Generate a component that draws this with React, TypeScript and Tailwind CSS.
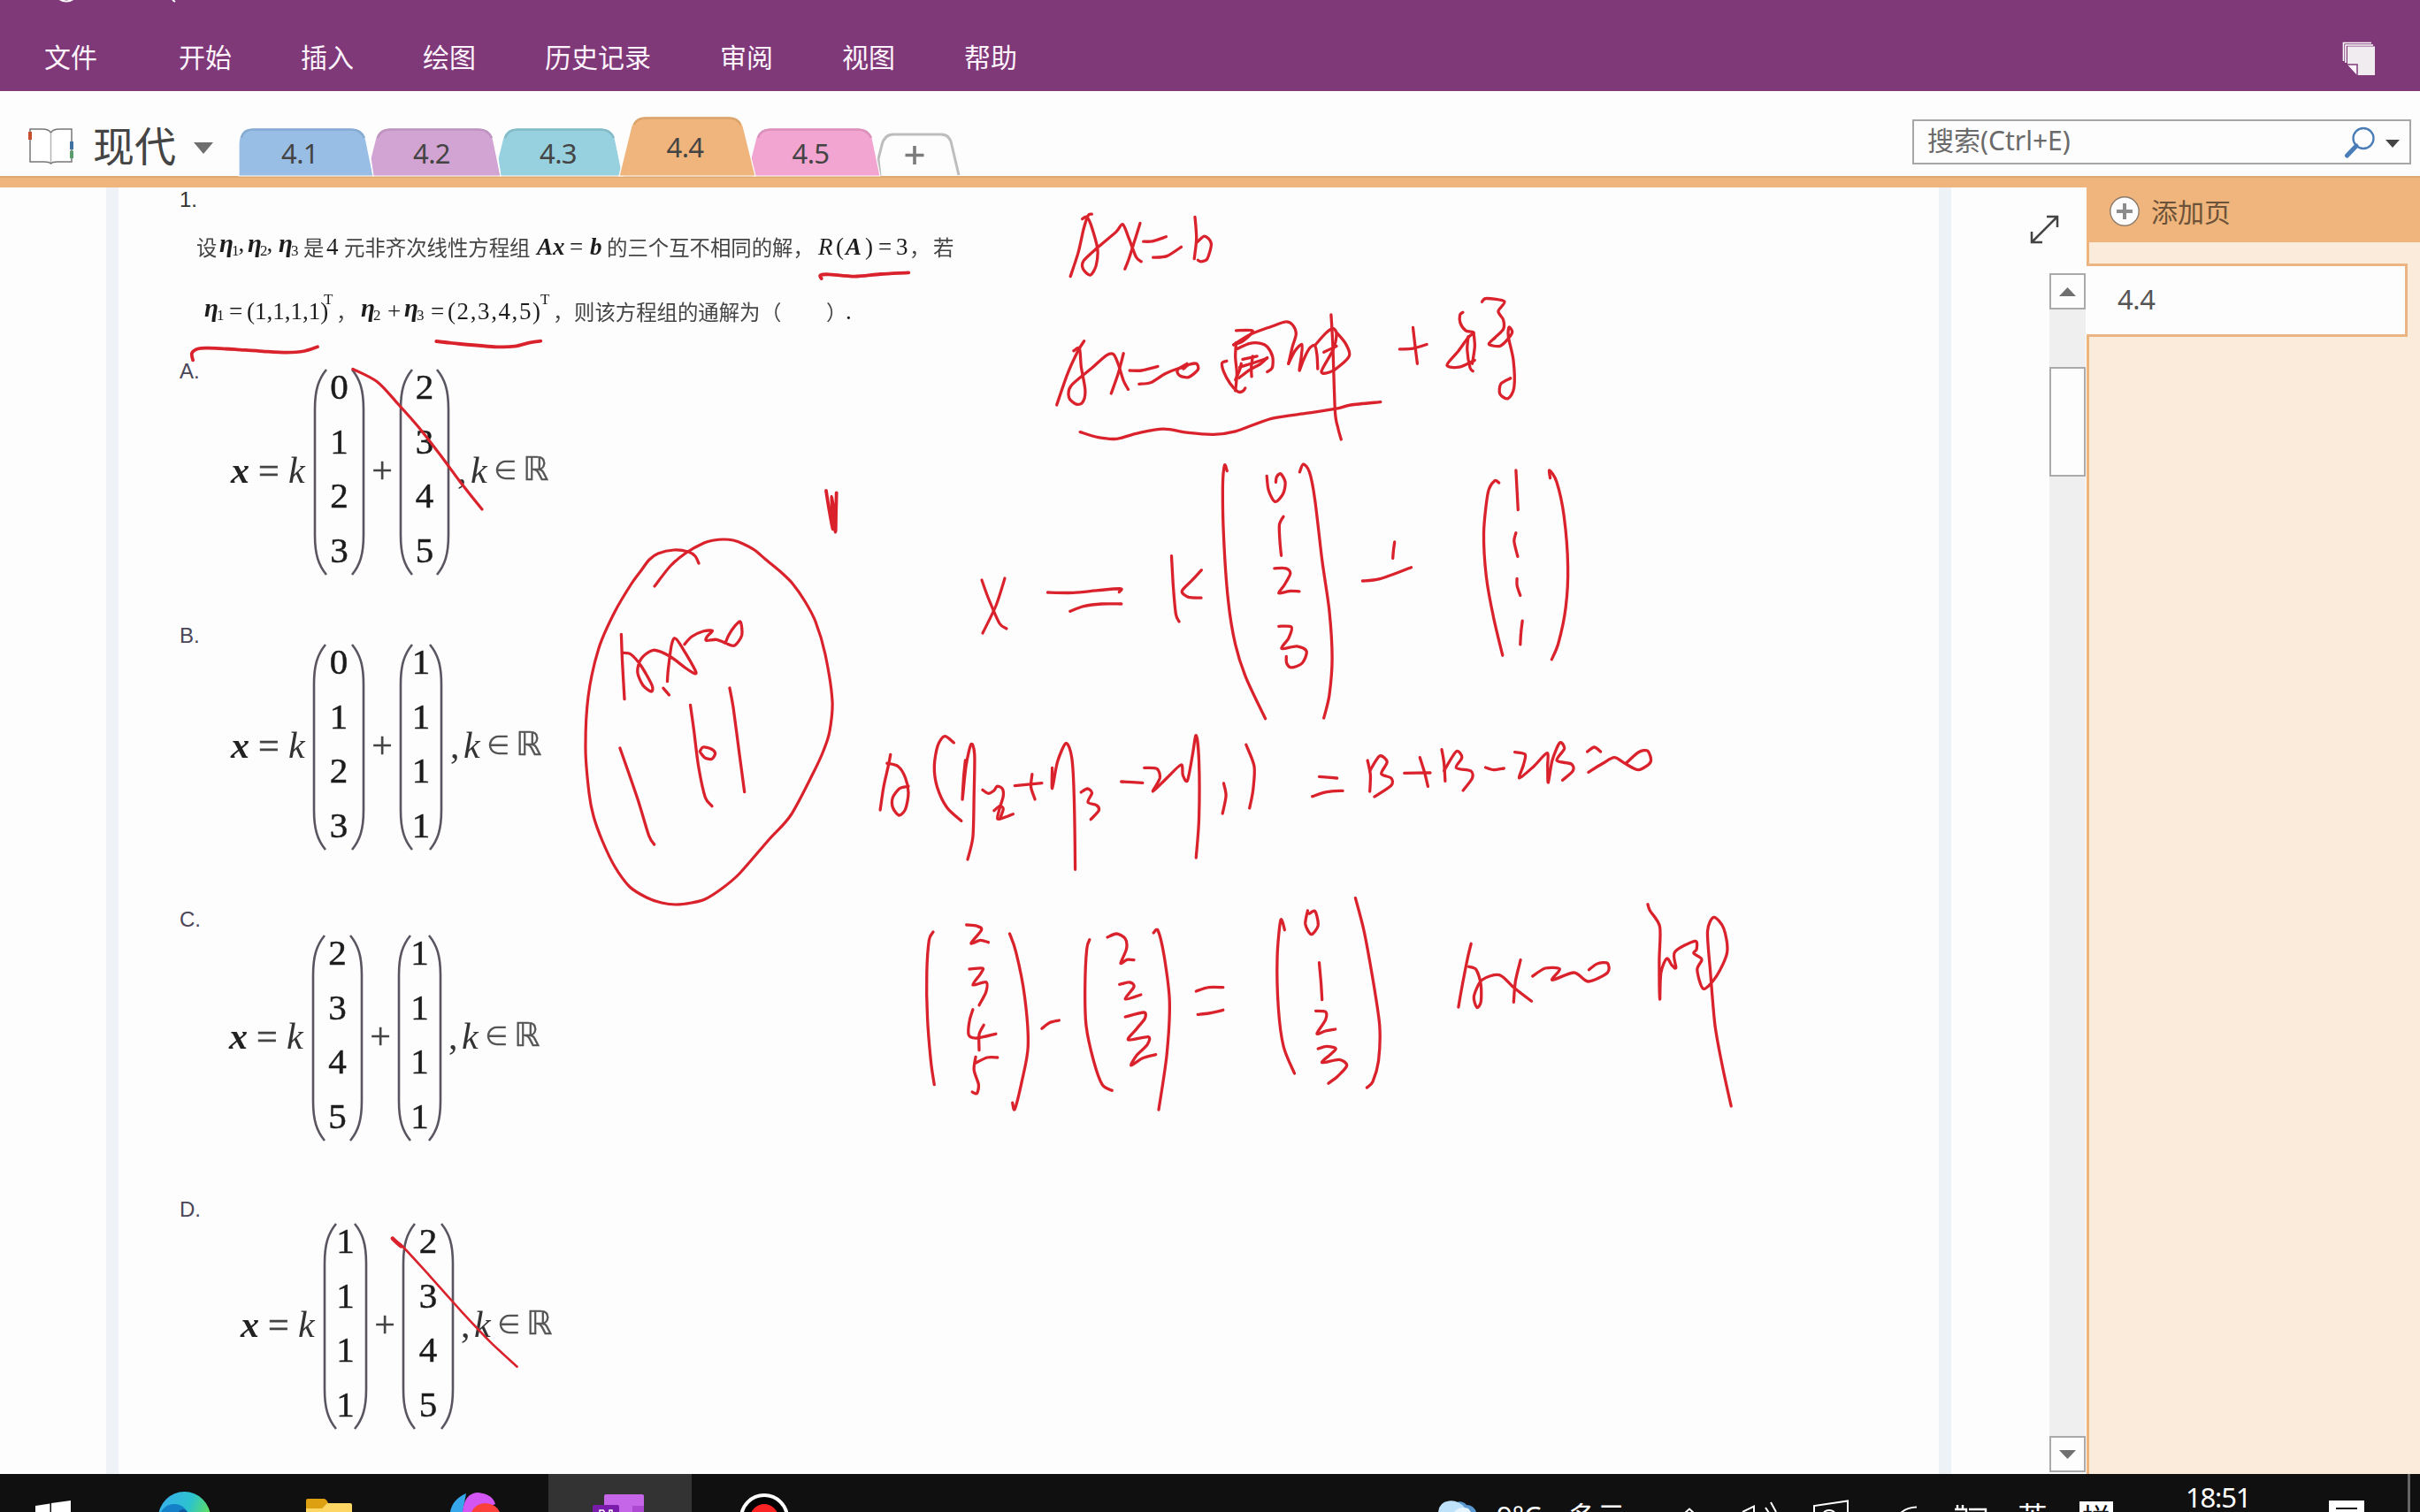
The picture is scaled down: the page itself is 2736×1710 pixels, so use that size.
import React from "react";

type Frame = { x: number; y: number; sx: number; sy: number; strokes: string[]; width?: number };

const MENU = [
  { label: "文件", cls: "ml-[50px]" },
  { label: "开始", cls: "ml-[92px]" },
  { label: "插入", cls: "ml-[78px]" },
  { label: "绘图", cls: "ml-[78px]" },
  { label: "历史记录", cls: "ml-[78px]" },
  { label: "审阅", cls: "ml-[78px]" },
  { label: "视图", cls: "ml-[78px]" },
  { label: "帮助", cls: "ml-[78px]" },
];

const TABS = [
  { label: "4.1", w: 152, h: 54, fill: "#99bee6", edge: "#86abd3", box: "w-[152px] h-[54px]", square: true, tail: "pr-[14px] pt-[3px]" },
  { label: "4.2", w: 147, h: 54, fill: "#d2a4d3", edge: "#be93c0", box: "w-[147px] h-[54px] -ml-[3px]", tail: "pr-[9px] pt-[3px]" },
  { label: "4.3", w: 141, h: 54, fill: "#97d0de", edge: "#84bac8", box: "w-[141px] h-[54px] -ml-[3px]", tail: "pr-[5px] pt-[3px]" },
  { label: "4.4", w: 154, h: 67, fill: "#efb57c", edge: "#dca46d", box: "w-[154px] h-[67px] -ml-[4px] z-10", tail: "pr-[5px] pt-[1px]" },
  { label: "4.5", w: 146, h: 54, fill: "#f2a5d0", edge: "#da90ba", box: "w-[146px] h-[54px] -ml-[5px]", tail: "pr-[11px] pt-[3px]" },
];

const INK: Frame[] = [
  {
    x: 180, y: 200, sx: 0.58675, sy: 0.33333, width: 3.8,
    strokes: [
      "1276 345 1274 334 1290 331 1340 338 1390 330 1444 325",
      "534 558 580 567 650 577 685 575 715 562 735 557",
      "65 622 63 598 76 583 95 581 150 586 200 592 245 596 280 591 305 577",
      "1285 1065 1290 1120 1298 1195 1297 1140 1296 1085 1300 1140 1303 1205 1304 1140 1305 1072",
    ],
  },
  { x: 180, y: 200, sx: 0.58675, sy: 0.33333, width: 3.2, strokes: ["373 652 420 695 460 770 500 850 540 940 580 1035 622 1128"] },
  {
    x: 0, y: 0, sx: 1, sy: 1, width: 3.2,
    strokes: [
      "790 637 786 629 778 624 762 622 744 626 734 633 725 645 714 660 695 692 677 733 665 788 662 847 666 897 671 923 681 951 695 980 712 1003 731 1015 748 1021 764 1023 782 1021 797 1017 816 1005 836 988 869 950 894 922 920 873 931 849 938 827 941 793 933 740 922 703 910 680 896 660 884 648 866 633 853 622 840 615 829 611 818 610 807 611 796 614 776 625 758 640 740 663",
      "1110 656 1118 678 1130 705 1138 711",
      "1136 654 1126 685 1111 716",
    ],
  },
  {
    x: 180, y: 660, sx: 0.5102, sy: 0.33333,
    strokes: [
      "1024 172 1026 260 1031 392",
      "1026 235 1045 240 1068 280 1092 345 1090 366 1072 345 1060 300 1068 255 1095 226 1130 245 1165 285 1186 305 1188 295 1160 220 1143 185 1135 210 1128 290 1126 332",
      "1117 355 1130 378",
      "1164 206 1180 180 1205 162 1226 160 1215 178 1212 193 1235 190 1255 202 1275 210 1291 175 1288 130 1275 145 1262 175 1255 200",
      "1021 558 1060 730 1085 855 1097 885",
      "1177 412 1185 500 1195 620 1210 725 1225 755",
      "1198 570 1205 555 1222 560 1232 575 1225 595 1210 592 1200 575",
      "1264 354 1272 420 1285 570 1297 707",
    ],
  },
  { x: 180, y: 1160, sx: 0.5102, sy: 0.33333, strokes: ["516 722 540 750 600 850 670 970 735 1075 793 1157"], width: 2.6 },
  { x: 180, y: 1160, sx: 0.5102, sy: 0.33333, strokes: ["517 722 526 735 536 748"], width: 4.5 },
  {
    x: 1160, y: 220, sx: 0.40816, sy: 0.38265,
    strokes: [
      "123 242 145 170 160 100 172 62 182 58",
      "156 72 168 66 180 90 198 160 194 210 178 238 158 220 160 195 200 155 250 110 268 88 285 130 305 185 319 198",
      "316 85 300 140 285 190 274 220",
      "325 139 350 138 388 125",
      "352 186 390 182 430 155",
      "468 66 472 130 466 190",
      "475 140 495 123 513 145 502 190 485 198 476 194",
      "85 622 115 530 145 460 161 433",
      "132 462 148 455 153 510 164 580 156 615 138 619 119 600 125 565 180 515 222 476 242 472 255 500 270 550 283 576",
      "270 470 255 530 236 588",
      "287 520 320 520 365 508",
      "313 560 345 556 385 530 425 513 440 512",
      "446 500 420 518 425 535 450 540 476 518 472 500 450 503 436 515",
      "582 402 628 403 602 432 575 444",
      "582 438 580 480 584 530 580 580",
      "556 492 543 498 548 525 565 558 583 580 592 584 602 580 607 572",
      "575 444 620 414 680 390 720 376 738 385 748 412 738 450 727 500",
      "585 456 620 440 650 440 668 450 683 480 682 512 668 524",
      "600 487 640 478",
      "580 548 592 518 596 500",
      "590 542 620 518 650 500 668 482",
      "592 510 640 494 668 484",
      "628 478 624 510 625 538",
      "727 500 745 462 764 443 763 475 757 520 768 490 785 455 800 446 806 475 808 515",
      "800 446 830 410 850 396 860 412 850 460 818 524 850 521 895 478 885 440 858 405",
      "825 466 860 448",
      "845 355 850 450 856 640 864 690 873 724",
      "150 702 200 718 250 722 310 705 380 693 450 704 520 709 580 700 680 662 780 646 860 633 900 622 982 613",
      "1035 457 1072 455 1110 443",
      "1072 393 1078 450 1084 500",
      "1210 348 1202 356 1203 380 1218 402 1240 408 1225 422 1198 462 1166 504 1200 510 1243 490",
      "1225 420 1222 460 1230 512 1238 522",
      "1240 410 1243 450 1236 500",
      "1263 317 1275 307 1325 316 1308 345 1322 370 1322 398 1300 422 1282 442 1315 447 1346 410 1338 392 1336 420 1350 490 1352 570 1335 603 1313 590 1315 560 1342 543",
      "60 1176 130 1177 200 1170 262 1165 258 1175",
      "122 1232 160 1217 210 1210 264 1210",
      "403 1068 408 1160 415 1240 424 1262",
      "486 1110 460 1140 432 1172 450 1190 485 1192",
      "557 817 550 800 545 860 547 1000 560 1200 580 1330 610 1430 663 1549",
      "758 820 768 797 785 820 800 900 820 1080 840 1230 848 1370 840 1480 825 1547",
      "667 832 672 875 690 908 712 885 718 850 705 825 694 835 692 850",
      "713 952 702 975 703 1020 707 1067",
      "688 1105 720 1105 732 1120 715 1155 700 1178 730 1172 757 1173",
      "700 1276 735 1278 728 1310 708 1342 750 1335 777 1350 765 1385 735 1398 722 1385 721 1365",
      "932 1142 980 1136 1067 1102",
      "1021 1027 1018 1050 1016 1075",
      "1310 852 1298 846 1280 880 1268 1000 1275 1130 1295 1250 1320 1362",
      "1452 838 1450 815 1470 850 1490 950 1501 1100 1495 1220 1475 1325 1456 1374",
      "1357 815 1363 932",
      "1357 1000 1352 1025 1362 1070",
      "1360 1135 1360 1155 1369 1185",
      "1375 1260 1371 1295 1369 1330",
    ],
  },
  {
    x: 960, y: 800, sx: 0.6505, sy: 0.33333,
    strokes: [
      "54 348 60 270 68 200 72 160",
      "66 190 85 200 98 240 103 290 98 345 87 366 76 340 76 305 88 275 103 268",
      "182 120 166 98 154 130 148 200 153 270 170 340 195 385",
      "202 180 199 240 197 312 203 200 212 125 218 160 217 300 215 440 206 516",
      "232 280 242 292 252 282 257 268 266 275 268 300 262 340 258 378 272 372 285 362",
      "252 350 262 335 268 345 262 378",
      "288 266 335 257",
      "318 227 316 270 323 312",
      "353 205 353 275 362 185 377 122 387 170 391 300 393 550",
      "403 288 414 276 422 290 415 322 430 332 434 350 420 380",
      "473 252 510 256",
      "513 205 535 208 540 240 528 285 552 240 577 195 580 230 588 248 597 160 603 95 608 180 608 380 603 510",
      "651 258 655 300 649 360",
      "690 127 704 200 702 280 696 342",
      "817 235 848 240",
      "805 302 830 287 858 283",
      "901 180 906 230 905 285",
      "905 215 922 165 935 185 925 225 942 240 942 265 913 303",
      "965 223 1010 222",
      "992 170 1000 220 1006 268",
      "1030 143 1034 190 1036 250",
      "1034 215 1055 150 1065 170 1055 205 1080 215 1083 240 1067 282",
      "1106 204 1120 212 1138 207",
      "1157 152 1175 160 1172 195 1165 240 1190 200 1213 155 1214 200 1215 255 1222 180 1235 120 1243 140 1230 180 1255 192 1258 215 1240 247",
      "1283 150 1295 135 1306 150",
      "1285 220 1310 190 1330 170 1348 190 1372 212 1393 185 1388 148 1372 152 1350 190",
      "146 762 139 790 135 900 136 1050 142 1200 148 1280",
      "204 738 222 742 230 755 212 800 228 790 242 797",
      "209 888 232 885 228 905 215 942 238 932 238 965 226 1010",
      "215 1025 209 1065 208 1112 222 1122 255 1108",
      "234 1078 226 1110 226 1163",
      "220 1186 217 1230 225 1280 222 1310 214 1305",
      "220 1206 240 1188 258 1188",
      "279 768 290 830 305 980 311 1150 300 1270 288 1363 284 1342",
      "335 1090 348 1070 365 1062",
      "418 788 413 820 410 950 412 1080 425 1200 440 1280 457 1300",
      "449 780 465 768 480 785 482 820 472 868 483 856 495 857",
      "470 940 488 933 495 948 480 990 507 975",
      "480 1050 512 1035 514 1055 500 1090 485 1128 520 1118 518 1145 500 1180 490 1215 510 1190 533 1178",
      "529 765 537 758 548 850 557 1000 552 1180 538 1365",
      "603 963 625 950 650 950",
      "606 1042 625 1038 650 1027",
      "757 755 750 722 744 850 746 1020 755 1150 774 1242",
      "797 690 793 735 803 770 815 740 810 692 800 700",
      "817 866 820 930 822 992",
      "811 1030 828 1033 828 1060 813 1107 828 1098 845 1092",
      "815 1158 830 1150 846 1158 835 1180 822 1205 852 1195 865 1215 850 1250 833 1276",
      "880 647 895 760 910 920 922 1080 920 1200 910 1270 900 1290",
      "1059 1017 1066 940 1075 850 1081 802",
      "1077 880 1090 890 1098 940 1098 1000 1091 1018 1086 980 1100 925 1130 908 1155 950 1186 997",
      "1167 857 1158 930 1155 1000",
      "1188 912 1210 885 1235 888 1222 925 1260 900 1285 930 1318 900 1318 868 1300 870 1286 890",
      "1388 668 1392 690 1409 745 1408 860 1409 990 1411 900 1421 852 1430 875 1437 883 1435 830 1470 793 1473 820 1468 835 1482 855 1474 890 1485 955 1508 910 1526 830 1520 750 1503 712 1492 760 1497 900 1505 1080 1518 1220 1533 1353",
    ],
  },
];

/* Turns a list of pen positions into one smooth curve through all of them. */
function penPath(frame: Frame, stroke: string): string {
  const n = stroke.split(" ").map(Number);
  const p: number[][] = [];
  for (let i = 0; i < n.length; i += 2) p.push([frame.x + n[i] * frame.sx, frame.y + n[i + 1] * frame.sy]);
  const f = (v: number) => v.toFixed(1);
  let d = `M${f(p[0][0])} ${f(p[0][1])}`;
  for (let i = 0; i < p.length - 1; i++) {
    const a = p[Math.max(0, i - 1)], b = p[i], c = p[i + 1], e = p[Math.min(p.length - 1, i + 2)];
    d += `C${f(b[0] + (c[0] - a[0]) / 7)} ${f(b[1] + (c[1] - a[1]) / 7)} ${f(c[0] - (e[0] - b[0]) / 7)} ${f(c[1] - (e[1] - b[1]) / 7)} ${f(c[0])} ${f(c[1])}`;
  }
  return d;
}

function Ink() {
  return (
    <svg className="absolute left-0 top-0 w-[2192px] h-[1455px] pointer-events-none" viewBox="0 212 2192 1455" fill="none" stroke="#da222c" strokeLinecap="round" strokeLinejoin="round">
      {INK.map((fr, i) => (
        <g key={i} strokeWidth={fr.width ?? 3.3}>
          {fr.strokes.map((s, j) => <path key={j} d={penPath(fr, s)} />)}
        </g>
      ))}
    </svg>
  );
}

function Paren({ right = false }: { right?: boolean }) {
  return (
    <svg className="w-[16px] h-[234px] shrink-0" viewBox="0 0 16 234" fill="none" stroke="#5a5560" strokeWidth="2.6">
      <path d={right ? "M1 1C10 12 14 24 14 46V188C14 210 10 222 1 233" : "M15 1C6 12 2 24 2 46V188C2 210 6 222 15 233"} />
    </svg>
  );
}

function Vector({ v, box }: { v: string[]; box: string }) {
  return (
    <div className={`flex justify-between shrink-0 ${box}`}>
      <Paren />
      <div className="-mt-[2px] flex flex-col w-0 items-center">
        {v.map((d, i) => <span key={i} className="h-[61.5px] leading-[44px] text-[41px] text-[#1c1c1c] [-webkit-text-stroke:0.5px_#1c1c1c]">{d}</span>)}
      </div>
      <Paren right />
    </div>
  );
}

type Option = { label: string; a: string[]; b: string[]; row: string; pad: string; lead: string; v1: string; plus: string; v2: string; tail: string };

const OPTIONS: Option[] = [
  { label: "A.", a: ["0", "1", "2", "3"], b: ["2", "3", "4", "5"], row: "h-[299px]", pad: "pt-[25px]", lead: "ml-[57px] w-[93px]", v1: "w-[59px]", plus: "w-[38px]", v2: "w-[58px]", tail: "ml-[8px]" },
  { label: "B.", a: ["0", "1", "2", "3"], b: ["1", "1", "1", "1"], row: "h-[321px]", pad: "pt-[37px]", lead: "ml-[57px] w-[92px]", v1: "w-[60px]", plus: "w-[38px]", v2: "w-[50px]", tail: "ml-[8px]" },
  { label: "C.", a: ["2", "3", "4", "5"], b: ["1", "1", "1", "1"], row: "h-[328px]", pad: "pt-[45px]", lead: "ml-[55px] w-[93px]", v1: "w-[59px]", plus: "w-[38px]", v2: "w-[51px]", tail: "ml-[7px]" },
  { label: "D.", a: ["1", "1", "1", "1"], b: ["2", "3", "4", "5"], row: "h-[327px]", pad: "pt-[43px]", lead: "ml-[68px] w-[93px]", v1: "w-[51px]", plus: "w-[38px]", v2: "w-[60px]", tail: "ml-[7px]" },
];

function OptionRow({ o }: { o: Option }) {
  return (
    <div className={`flex items-start pl-[203px] ${o.row}`}>
      <div className="w-0 pt-[13px] leading-[30px] text-[24px] text-[#4a4658] font-['Liberation_Sans',sans-serif] whitespace-nowrap">{o.label}</div>
      <div className={`ml-[1px] flex font-['Liberation_Serif',serif] text-[42px] text-[#333] blur-[0.6px] ${o.pad}`}>
        <div className={`flex pt-[93px] h-[234px] leading-[44px] shrink-0 ${o.lead}`}>
          <i className="w-[31px] font-bold text-[#222]">x</i>
          <span className="w-[34px] text-[#444] [-webkit-text-stroke:0.6px_#444]">=</span>
          <i>k</i>
        </div>
        <Vector v={o.a} box={o.v1} />
        <span className={`pt-[93px] leading-[44px] text-center shrink-0 text-[#444] [-webkit-text-stroke:0.4px_#444] ${o.plus}`}>+</span>
        <Vector v={o.b} box={o.v2} />
        <div className={`flex pt-[93px] leading-[44px] ${o.tail}`}>
          <span className="w-[15px]">,</span>
          <i className="w-[26px]">k</i>
          <span className="w-[33px] text-[30px] text-[#555] font-['DejaVu_Sans',sans-serif]">∈</span>
          <span className="-mt-[1px] text-[37px] text-[#555] font-['DejaVu_Sans',sans-serif] [-webkit-text-stroke:0.4px_#555]">ℝ</span>
        </div>
      </div>
    </div>
  );
}

const eta = (s: string, w: string, comma = "") => (
  <span className={`flex shrink-0 whitespace-nowrap ${w}`}>
    <i className="font-bold text-[29px]">η</i>
    <span className="-ml-[2px] mt-[9px] text-[17px]">{s}</span>
    <span className="-ml-[1px]">{comma}</span>
  </span>
);

function Question() {
  const cjk = "font-['Noto_Sans_CJK_SC',sans-serif] text-[23.4px] text-[#444] shrink-0 whitespace-nowrap";
  return (
    <div className="font-['Liberation_Serif',serif] text-[27px] text-[#1c1c1c] blur-[0.6px]">
      <div className="flex items-center h-[66px] pl-[222px] leading-[34px]">
        <span className={`${cjk} w-[26px]`}>设</span>
        {eta("1", "w-[32px]", ",")}
        {eta("2", "w-[35px]", ",")}
        {eta("3", "w-[28px]")}
        <span className={`${cjk} w-[26px]`}>是</span>
        <span className="w-[20px] shrink-0">4</span>
        <span className={`${cjk} w-[218px]`}>元非齐次线性方程组</span>
        <span className="flex w-[79px] shrink-0"><i className="font-bold w-[37px]">Ax</i><span className="w-[23px]">=</span><i className="font-bold">b</i></span>
        <span className={`${cjk} w-[239px]`}>的三个互不相同的解，</span>
        <span className="flex w-[103px] shrink-0"><i className="w-[20px]">R</i><span className="w-[11px]">(</span><i className="font-bold w-[22px]">A</i><span className="w-[15px]">)</span><span className="w-[20px]">=</span>3</span>
        <span className={`${cjk} w-[27px]`}>，</span>
        <span className={cjk}>若</span>
      </div>
      <div className="flex items-center h-[80px] pl-[231px] leading-[34px]">
        {eta("1", "w-[28px]")}
        <span className="w-[20px] shrink-0">=</span>
        <span className="w-[87px] shrink-0 whitespace-nowrap">(1,1,1,1)</span>
        <span className="w-[14px] shrink-0 text-[17px] pb-[26px]">T</span>
        <span className={`${cjk} w-[28px]`}>，</span>
        {eta("2", "w-[30px]")}
        <span className="w-[19px] shrink-0">+</span>
        {eta("3", "w-[30px]")}
        <span className="w-[19px] shrink-0">=</span>
        <span className="w-[105px] shrink-0 whitespace-nowrap tracking-[1.6px]">(2,3,4,5)</span>
        <span className="w-[14px] shrink-0 text-[17px] pb-[26px]">T</span>
        <span className={`${cjk} w-[24px]`}>，</span>
        <span className={`${cjk} w-[211px]`}>则该方程组的通解为</span>
        <span className={`${cjk} w-[74px]`}>（</span>
        <span className={`${cjk} w-[22px]`}>）</span>
        <span>.</span>
      </div>
    </div>
  );
}

function TopBar() {
  return (
    <header className="relative flex h-[103px] shrink-0 bg-[#7f3878] text-[30px] text-[#fdf3fc] font-['Noto_Sans_CJK_SC',sans-serif]">
      <svg className="absolute left-[60px] top-0 w-[150px] h-[5px]" viewBox="0 0 150 5" fill="none" stroke="#fff" strokeWidth="2">
        <path d="M7 -1Q15 4 23 -1M135 0L138 2" />
      </svg>
      {MENU.map((m) => <span key={m.label} className={`pt-[42px] leading-[42px] ${m.cls}`}>{m.label}</span>)}
      <svg className="ml-auto mr-[50px] mt-[47px] w-[38px] h-[39px]" viewBox="0 0 38 39" fill="none">
        <path d="M1.500 22V1.500H33M4 24V4H35" stroke="#fff" strokeWidth="1.600" />
        <path d="M6 5.500H37V38H17L6 26Z" fill="#f0ecf0" />
        <path d="M6 26H17V38" stroke="#7f3878" strokeWidth="1.500" fill="#fdf3fc" />
      </svg>
    </header>
  );
}

function TabBar() {
  return (
    <div className="flex h-[96px] shrink-0 bg-[#fdfdfd] text-[#444]">
      <svg className="ml-[32px] mt-[41px] w-[51px] h-[42px]" viewBox="0 0 51 42" fill="none">
        <path d="M2 2H16Q23 2 25.500 6Q28 2 35 2H49V39H33Q27 39 25.500 41Q24 39 18 39H2Z" stroke="#777" strokeWidth="1.500" fill="#fff" />
        <path d="M25.500 6V40" stroke="#b5b5b5" strokeWidth="1.500" />
        <path d="M0 5H4V14H0Z" fill="#c6502f" />
        <path d="M47 16H51V25H47Z" fill="#3f72a0" />
        <path d="M47 26.500H51V35H47Z" fill="#5a9c6c" />
      </svg>
      <span className="ml-[22px] pt-[27px] leading-[66px] text-[47px] w-[95px] shrink-0 font-['Noto_Sans_CJK_SC',sans-serif]">现代</span>
      <svg className="ml-[19px] mt-[58px] w-[22px] h-[13px]" viewBox="0 0 22 13"><path d="M0 0H22L11 13Z" fill="#6e6e6e" /></svg>
      <div className="ml-[29px] flex items-end h-full">
        {TABS.map((t) => (
          <div key={t.label} className={`relative shrink-0 ${t.box}`}>
            <svg className="absolute inset-0 h-full w-full overflow-visible" viewBox={`0 0 ${t.w} ${t.h}`}>
              <path
                d={t.square
                  ? `M0 ${t.h}V18Q0 0 16 0H${t.w - 24}Q${t.w - 11} 0 ${t.w - 8} 15L${t.w} ${t.h}Z`
                  : t.h > 60
                    ? `M0 ${t.h}L13 14Q16 0 30 0H${t.w - 30}Q${t.w - 16} 0 ${t.w - 13} 14L${t.w} ${t.h}Z`
                    : `M3 ${t.h}L0 34L5 14Q8 0 22 0H${t.w - 24}Q${t.w - 11} 0 ${t.w - 8} 15L${t.w} ${t.h}Z`}
                fill={t.fill} stroke="#fdfdfd" strokeWidth="1.200" />
              <path
                d={t.square
                  ? `M3 11Q5 1.500 16 1.500H${t.w - 25}Q${t.w - 14} 1.500 ${t.w - 10} 11`
                  : t.h > 60
                    ? `M17 9Q20 1.500 30 1.500H${t.w - 30}Q${t.w - 20} 1.500 ${t.w - 17} 9`
                    : `M8 11Q11 1.500 22 1.500H${t.w - 25}Q${t.w - 14} 1.500 ${t.w - 10} 11`}
                fill="none" stroke={t.edge} strokeWidth="2.500" />
            </svg>
            <span className={`relative flex h-full items-center justify-center text-[31px] tracking-[-0.6px] text-[#444] font-['Noto_Sans',sans-serif] ${t.tail}`}>{t.label}</span>
          </div>
        ))}
        <svg className="-ml-[3px] w-[94px] h-[49px] shrink-0" viewBox="0 0 94 49" fill="none">
          <path d="M3 49L1 30L5 14Q8 2 18 2H72Q82 2 84 14L92 48" stroke="#bdbdbd" strokeWidth="3" fill="#fdfdfd" />
          <path d="M42 15V36M31.500 25.500H52.500" stroke="#7b7b7b" strokeWidth="3.600" />
        </svg>
      </div>
      <div className="ml-auto mr-[10px] mt-[32px] flex h-[51px] w-[564px] items-start border-2 border-[#a6a6a6] text-[#6a6a6a]">
        <span className="ml-[15px] leading-[41px] text-[30px] whitespace-nowrap font-['Noto_Sans',sans-serif]"><span className="font-['Noto_Sans_CJK_SC',sans-serif]">搜索</span>(Ctrl+E)</span>
        <svg className="ml-auto mt-[6px] w-[36px] h-[36px] shrink-0" viewBox="0 0 36 36" fill="none" stroke="#4a7db8">
          <circle cx="22" cy="13.500" r="11.500" strokeWidth="2.300" />
          <path d="M14 22L3.500 33" strokeWidth="5" strokeLinecap="round" />
        </svg>
        <svg className="ml-[11px] mr-[11px] mt-[21px] w-[16px] h-[9px] shrink-0" viewBox="0 0 16 9"><path d="M0 0H16L8 9Z" fill="#444" /></svg>
      </div>
    </div>
  );
}

function ScrollBar() {
  return (
    <div className="mt-[97px] flex h-[1356px] w-[41px] shrink-0 flex-col bg-[#efefef]">
      <div className="flex h-[41px] items-center justify-center border-2 border-[#aaa] bg-[#fdfdfd]">
        <svg className="w-[19px] h-[10px]" viewBox="0 0 19 10"><path d="M0 10H19L9.500 0Z" fill="#6f6f6f" /></svg>
      </div>
      <div className="mt-[65px] h-[124px] border-2 border-[#aaa] bg-[#fdfdfd]" />
      <div className="mt-auto flex h-[41px] items-center justify-center border-2 border-[#aaa] bg-[#fdfdfd]">
        <svg className="w-[19px] h-[10px]" viewBox="0 0 19 10"><path d="M0 0H19L9.500 10Z" fill="#6f6f6f" /></svg>
      </div>
    </div>
  );
}

function Sidebar() {
  return (
    <aside className="flex w-[377px] shrink-0 flex-col bg-[#faebdb]">
      <div className="flex h-[62px] shrink-0 items-start bg-[#efb57c]">
        <svg className="ml-[26px] mt-[10px] w-[34px] h-[34px]" viewBox="0 0 34 34" fill="none">
          <circle cx="17" cy="17" r="16.200" fill="#fdfdfd" stroke="#8a7a6a" strokeWidth="1.400" />
          <path d="M17 8V26M8 17H26" stroke="#8c8c8c" strokeWidth="4" />
        </svg>
        <span className="ml-[13px] mt-[4px] leading-[44px] text-[30px] text-[#6b5238] font-['Noto_Sans_CJK_SC',sans-serif]">添加页</span>
      </div>
      <div className="h-[24px] shrink-0 border-l-[3px] border-[#eeb47b]" />
      <div className="flex h-[83px] w-[363px] shrink-0 items-center border-y-[3px] border-r-[3px] border-[#eab583] bg-[#fdfdfd] pb-[2px] pl-[35px] text-[31px] tracking-[-0.4px] text-[#555] font-['Noto_Sans',sans-serif]">4.4</div>
      <div className="flex-1 border-l-[3px] border-[#eeb47b]" />
    </aside>
  );
}

function Canvas() {
  return (
    <main className="relative flex flex-1 overflow-hidden bg-[#fdfdfd]">
      <div className="ml-[120px] w-[14px] shrink-0 bg-[#eff2f7]" />
      <div className="-ml-[134px] w-[2192px] shrink-0">
        <div className="h-[34px] pl-[203px] leading-[28px] text-[24px] text-[#333] font-['Liberation_Sans',sans-serif]">1.</div>
        <Question />
        {OPTIONS.map((o) => <OptionRow key={o.label} o={o} />)}
      </div>
      <div className="w-[14px] shrink-0 bg-[#edf2f7]" />
      <svg className="ml-[89px] -mr-[11px] mt-[31px] w-[33px] h-[33px] shrink-0" viewBox="0 0 33 33" fill="none" stroke="#444" strokeWidth="2.500">
        <path d="M2 31L31 2M19 2H31V14M2 19V31H14" />
      </svg>
      <ScrollBar />
      <Ink />
    </main>
  );
}

function Taskbar() {
  return (
    <footer className="flex h-[43px] shrink-0 items-start overflow-hidden bg-[#101010] text-white">
      <svg className="ml-[40px] mt-[30px] w-[40px] h-[13px] shrink-0" viewBox="0 0 40 13"><path d="M0 6L16.500 3.500V13H0ZM18 3L40 0V13H18Z" fill="#fff" /></svg>
      <svg className="ml-[99px] mt-[20px] w-[59px] h-[23px] shrink-0" viewBox="0 0 59 23">
        <defs><linearGradient id="edge" x1="0" x2="1" y1="0" y2=".4"><stop offset=".2" stopColor="#35b4e6" /><stop offset=".6" stopColor="#2cc3cf" /><stop offset="1" stopColor="#62e05a" /></linearGradient></defs>
        <circle cx="29.500" cy="29.500" r="29.500" fill="url(#edge)" />
        <ellipse cx="18" cy="31" rx="17" ry="17" fill="#1380c8" />
        <ellipse cx="28" cy="29" rx="7" ry="9" fill="#0d5698" />
      </svg>
      <svg className="ml-[108px] mt-[28px] w-[52px] h-[15px] shrink-0" viewBox="0 0 52 15">
        <path d="M0 2Q0 0 2 0H20Q23 0 25 5L27 15H0Z" fill="#dda011" />
        <path d="M0 11H18L24 5H50Q52 5 52 7V15H0Z" fill="#fdd663" />
      </svg>
      <svg className="ml-[111px] mt-[21px] w-[56px] h-[22px] shrink-0" viewBox="0 0 56 22">
        <path d="M0 22Q2 8 18 1L14 22Z" fill="#35a7ea" />
        <path d="M14 22Q16 0 32 0Q48 2 51 13L30 22Z" fill="#d355f3" />
        <path d="M24 22Q29 12 40 12Q52 13 56 22Z" fill="#fb3f3b" />
      </svg>
      <div className="ml-[55px] h-[43px] w-[162px] shrink-0 bg-[#333]">
        <svg className="ml-[50px] mt-[23px] w-[60px] h-[20px]" viewBox="0 0 60 20">
          <path d="M13 2Q13 0 15 0H56Q58 0 58 2V20H13Z" fill="#c565e8" />
          <path d="M45 13H58V20H45Z" fill="#ac48d2" />
          <path d="M0 14Q0 12 2 12H28Q30 12 30 14V20H0Z" fill="#7a1cab" />
          <path d="M8 20V18H12L13.500 20M19 20V18H22V20" stroke="#fff" strokeWidth="1.500" fill="none" />
        </svg>
      </div>
      <svg className="ml-[54px] mt-[22px] w-[56px] h-[21px] shrink-0" viewBox="0 0 56 21">
        <circle cx="28" cy="28" r="26" fill="#000" stroke="#fff" strokeWidth="4" />
        <circle cx="28" cy="28" r="16" fill="#fb2323" />
      </svg>
      <svg className="ml-[734px] mt-[30px] w-[44px] h-[13px] shrink-0" viewBox="0 0 44 13">
        <path d="M16 4Q26 -2 32 5Q40 5 43 13H20Z" fill="#5b9ad0" />
        <path d="M0 13Q1 2 12 0.500Q22 -1 30 8L28 13Z" fill="#bfe2fb" />
        <path d="M18 13Q24 6 34 9L37 13Z" fill="#e6f4ff" />
      </svg>
      <span className="ml-[22px] mt-[27px] flex w-[210px] shrink-0 leading-[40px] text-[31px] whitespace-nowrap font-['Noto_Sans',sans-serif]">
        <span className="w-[80px]">9°C</span>
        <span className="text-[33px] font-['Noto_Sans_CJK_SC',sans-serif]">多云</span>
      </span>
      <svg className="w-[266px] h-[43px] shrink-0" viewBox="1902 1667 266 43" fill="none" stroke="#fff" strokeWidth="2">
        <path d="M1904 1712L1910 1706.500L1916 1712" />
        <path d="M1970 1710L1983 1703.500V1710M1996 1705L2000 1711M2002 1699L2008 1710" />
        <path d="M2051 1710V1703L2089 1697.500V1710M2062 1710Q2068 1706 2074 1710" />
        <path d="M2149 1711Q2156 1704.500 2167 1704.500" />
      </svg>
      <svg className="ml-[41px] mt-[34px] w-[38px] h-[9px] shrink-0" viewBox="0 0 38 9" fill="none" stroke="#fff" strokeWidth="2.400">
        <path d="M4 1V6M10 1V6M1 6H14V9M17 6H36V9" />
      </svg>
      <span className="ml-[34px] mt-[27px] w-[36px] shrink-0 text-[34px] leading-[42px] font-['Noto_Sans_CJK_SC',sans-serif]">英</span>
      <span className="ml-[34px] mt-[31px] h-[40px] w-[38px] shrink-0 bg-white pl-[3px] text-[32px] leading-[34px] text-[#101010] font-['Noto_Sans_CJK_SC',sans-serif]">拼</span>
      <span className="ml-[82px] mt-[5px] w-[162px] shrink-0 text-[31px] leading-[42px] tracking-[-1.2px] font-['Noto_Sans',sans-serif]">18:51</span>
      <svg className="mt-[30px] w-[40px] h-[13px] shrink-0" viewBox="0 0 40 13"><path d="M0 0H40V13H0Z" fill="#fff" /><path d="M8 9H32" stroke="#101010" strokeWidth="2" /></svg>
      <div className="ml-auto mr-[11px] h-[43px] w-[3px] bg-[#666]" />
    </footer>
  );
}

export default function App() {
  return (
    <div className="flex h-[1710px] w-[2736px] flex-col overflow-hidden bg-[#fdfdfd]">
      <TopBar />
      <TabBar />
      <div className="h-[13px] shrink-0 border-t-2 border-[#dda872] bg-[#efb57c]" />
      <div className="flex min-h-0 flex-1">
        <Canvas />
        <Sidebar />
      </div>
      <Taskbar />
    </div>
  );
}
